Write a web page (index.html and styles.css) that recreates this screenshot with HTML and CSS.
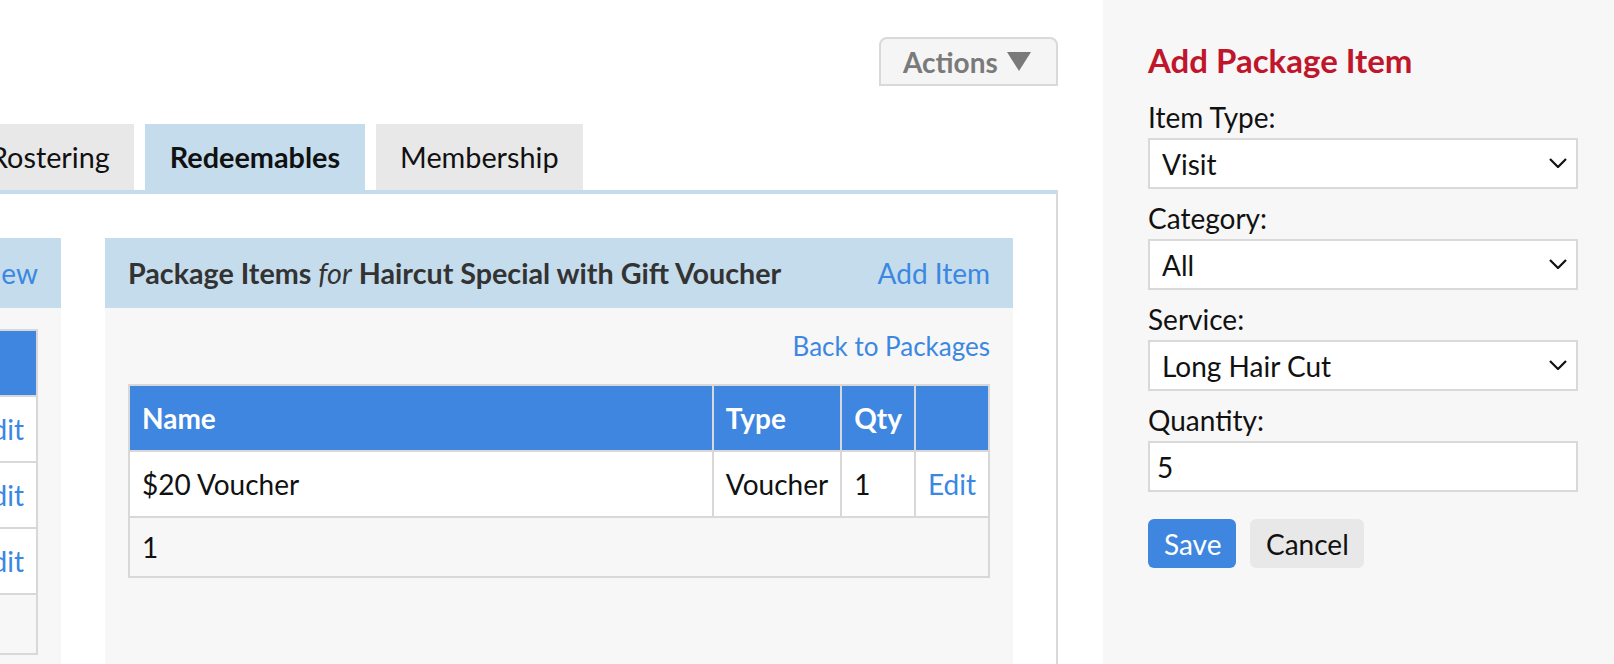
FILE: index.html
```html
<!DOCTYPE html>
<html>
<head>
<meta charset="utf-8">
<title>Package Items</title>
<link rel="stylesheet" href="styles.css">
</head>
<body>
<div class="layout">
  <main class="main">
    <div class="page">
      <div class="topbar">
        <button class="actions" type="button">Actions<svg class="caret" viewBox="0 0 24 19" width="24" height="19"><polygon points="0,0 24,0 12,19" fill="#7a7a7a"/></svg></button>
      </div>
      <nav class="tabs">
        <a class="tab">Rostering</a>
        <a class="tab active">Redeemables</a>
        <a class="tab">Membership</a>
      </nav>
      <section class="box">
        <div class="panel">
          <div class="panel-head"><span class="title">Packages</span><a class="link">New</a></div>
          <div class="panel-body">
            <table class="grid grid-fixed">
              <colgroup><col><col class="col-edit"></colgroup>
              <thead><tr><th>Name</th><th>&nbsp;</th></tr></thead>
              <tbody>
                <tr><td>Haircut Special</td><td><a class="link">Edit</a></td></tr>
                <tr><td>Colour Package</td><td><a class="link">Edit</a></td></tr>
                <tr><td>Blow Dry Pack</td><td><a class="link">Edit</a></td></tr>
              </tbody>
              <tfoot><tr><td colspan="2">&nbsp;</td></tr></tfoot>
            </table>
          </div>
        </div>
        <div class="panel">
          <div class="panel-head"><span class="title">Package Items <em>for</em> Haircut Special with Gift Voucher</span><a class="link">Add Item</a></div>
          <div class="panel-body">
            <div class="back"><a class="link">Back to Packages</a></div>
            <table class="grid">
              <thead><tr><th>Name</th><th class="shrink">Type</th><th class="shrink">Qty</th><th class="shrink">&nbsp;</th></tr></thead>
              <tbody>
                <tr><td>$20 Voucher</td><td class="shrink">Voucher</td><td class="shrink">1</td><td class="shrink"><a class="link">Edit</a></td></tr>
              </tbody>
              <tfoot><tr><td colspan="4">1</td></tr></tfoot>
            </table>
          </div>
        </div>
      </section>
    </div>
  </main>
  <aside class="sidebar">
    <h2 class="side-title">Add Package Item</h2>
    <div class="field">
      <label for="itype">Item Type:</label>
      <div class="select-wrap">
        <select id="itype"><option>Visit</option></select>
        <svg class="chev" viewBox="0 0 18 10" width="18" height="10"><path d="M1 1 L9 9 L17 1" fill="none" stroke="#111" stroke-width="2.2"/></svg>
      </div>
    </div>
    <div class="field">
      <label for="icat">Category:</label>
      <div class="select-wrap">
        <select id="icat"><option>All</option></select>
        <svg class="chev" viewBox="0 0 18 10" width="18" height="10"><path d="M1 1 L9 9 L17 1" fill="none" stroke="#111" stroke-width="2.2"/></svg>
      </div>
    </div>
    <div class="field">
      <label for="isvc">Service:</label>
      <div class="select-wrap">
        <select id="isvc"><option>Long Hair Cut</option></select>
        <svg class="chev" viewBox="0 0 18 10" width="18" height="10"><path d="M1 1 L9 9 L17 1" fill="none" stroke="#111" stroke-width="2.2"/></svg>
      </div>
    </div>
    <div class="field">
      <label for="iqty">Quantity:</label>
      <input id="iqty" class="text-input" type="text" value="5">
    </div>
    <div class="buttons">
      <button class="btn btn-primary" type="button">Save</button>
      <button class="btn btn-secondary" type="button">Cancel</button>
    </div>
  </aside>
</div>
</body>
</html>
```

FILE: styles.css
```css
* { box-sizing: border-box; }
html, body { margin: 0; padding: 0; }
body {
  font-family: Lato, "Noto Sans", sans-serif;
  font-size: 28px;
  line-height: 34px;
  color: #111;
  background: #fff;
  overflow: hidden;
}
.layout { display: flex; height: 664px; overflow: hidden; }
.main { flex: 0 0 1103px; overflow: hidden; }
.page { margin-left: -405px; padding-right: 45px; }

.topbar { display: flex; justify-content: flex-end; padding-top: 37px; }
.actions {
  display: flex; align-items: center;
  width: 179px; height: 49px;
  padding: 0 0 0 22px;
  font-family: Lato, sans-serif; font-size: 28px; font-weight: bold;
  color: #7a7a7a;
  background: #f5f5f5;
  border: 2px solid #d9d9d9;
  border-radius: 8px 8px 0 0;
}
.caret { margin-left: 9px; }

.tabs { display: flex; gap: 11px; margin-top: 38px; margin-left: 371px; font-size: 28.8px; }
.tab {
  display: block;
  padding: 16px 24px;
  background: #e8e8e8;
  color: #111;
}
.tab.active { background: #c4dcec; font-weight: bold; padding: 16px 25px; }

.box {
  display: grid;
  grid-template-columns: 420px 908px;
  gap: 44px;
  border-top: 4px solid #c4dcec;
  border-left: 2px solid #dadada;
  border-right: 2px solid #dadada;
  padding: 44px 43px 0 44px;
}
.panel { overflow: hidden; min-width: 0; }

.panel-head {
  display: flex; justify-content: space-between;
  background: #c4dcec;
  padding: 18px 23px;
  color: #333;
  white-space: nowrap;
}
.panel-head .title { font-weight: bold; font-size: 28.7px; }
.panel-head em { font-weight: normal; }
.link { color: #3b87e1; }

.panel-body { background: #f7f7f7; padding: 21px 23px; min-height: 420px; }
.back { text-align: right; margin-bottom: 21px; font-size: 26px; }

.grid { width: 100%; border-collapse: collapse; }
.grid-fixed { table-layout: fixed; }
.col-edit { width: 74px; }
.grid th, .grid td {
  border: 2px solid #d8d8d8;
  padding: 15px 12px;
  text-align: left;
  white-space: nowrap;
  overflow: hidden;
}
.grid th { background: #3e86e0; color: #fff; font-weight: bold; }
.grid td { background: #fff; }
.grid tfoot td { background: #f7f7f7; padding: 12px 12px; }
.shrink { width: 1%; }

.sidebar {
  flex: 1;
  background: #f7f7f7;
  padding: 40px 36px 0 45px;
}
.side-title {
  margin: 0 0 20px;
  font-size: 33px; line-height: 40px; font-weight: bold;
  color: #c0162c;
}
.field label { display: block; margin-bottom: 4px; }
.field + .field { margin-top: 12px; }
.select-wrap { position: relative; }
.select-wrap select, .text-input {
  display: block;
  width: 100%; height: 51px;
  border: 2px solid #d9d9d9;
  border-radius: 0;
  background: #fff;
  font-family: Lato, sans-serif; font-size: 28px;
  color: #111;
  padding: 0 40px 0 12px;
  appearance: none;
  -webkit-appearance: none;
  outline: none;
}
.text-input { padding: 0 7px; }
.chev { position: absolute; right: 11px; top: 20px; pointer-events: none; }

.buttons { display: flex; gap: 14px; margin-top: 27px; }
.btn {
  height: 49px;
  border: none; border-radius: 6px;
  font-family: Lato, sans-serif; font-size: 28px;
  padding: 0 16px;
}
.btn-primary { background: #3e86e0; color: #fff; width: 88px; }
.btn-secondary { background: #e8e8e8; color: #111; width: 114px; }
```
